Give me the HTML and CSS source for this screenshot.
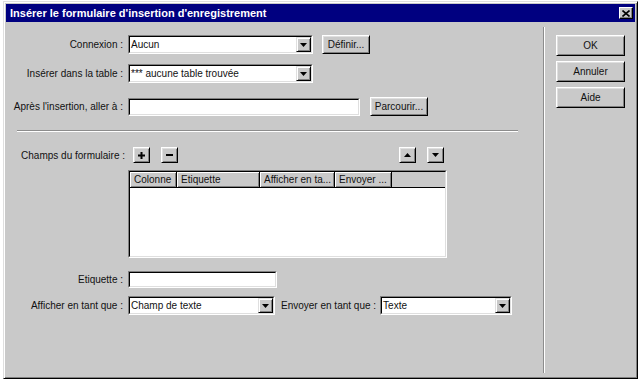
FILE: index.html
```html
<!DOCTYPE html>
<html lang="fr">
<head>
    <meta charset="UTF-8">
    <title>Insérer le formulaire d'insertion d'enregistrement</title>
    <link rel="stylesheet" href="styles.css">
</head>
<body>
    <div class="window">
        <div class="title-bar">
            <span class="title">Insérer le formulaire d'insertion d'enregistrement</span>
            <span class="close">
                <svg width="8" height="7" viewBox="0 0 8 7"><path d="M0.5 0.5 L7.5 6.5 M7.5 0.5 L0.5 6.5" stroke="#000" stroke-width="1.6"/></svg>
            </span>
        </div>
        <div class="content">
            <div class="main">
                <div class="row">
                    <span class="label">Connexion :</span>
                    <div class="select select-wide">
                        <div class="select-inner">
                            <span class="select-value">Aucun</span>
                            <span class="select-arrow"><svg width="7" height="4" viewBox="0 0 7 4"><polygon points="0,0 7,0 3.5,4" fill="#000"/></svg></span>
                        </div>
                    </div>
                    <button class="btn btn-define">Définir...</button>
                </div>
                <div class="row row-table">
                    <span class="label">Insérer dans la table :</span>
                    <div class="select select-wide">
                        <div class="select-inner">
                            <span class="select-value">*** aucune table trouvée</span>
                            <span class="select-arrow"><svg width="7" height="4" viewBox="0 0 7 4"><polygon points="0,0 7,0 3.5,4" fill="#000"/></svg></span>
                        </div>
                    </div>
                </div>
                <div class="row row-after">
                    <span class="label">Après l'insertion, aller à :</span>
                    <div class="field field-after"><div class="field-inner"></div></div>
                    <button class="btn btn-browse">Parcourir...</button>
                </div>
                <div class="separator"></div>
                <div class="row row-fields">
                    <span class="label label-fields">Champs du formulaire :</span>
                    <button class="btn tool-btn">
                        <svg width="7" height="7" viewBox="0 0 7 7"><rect x="2.5" y="0" width="2" height="7" fill="#000"/><rect x="0" y="2.5" width="7" height="2" fill="#000"/></svg>
                    </button>
                    <button class="btn tool-btn tool-minus">
                        <svg width="7" height="2" viewBox="0 0 7 2"><rect x="0" y="0" width="7" height="2" fill="#000"/></svg>
                    </button>
                    <button class="btn tool-btn tool-up">
                        <svg width="7" height="4" viewBox="0 0 7 4"><polygon points="0,4 7,4 3.5,0" fill="#000"/></svg>
                    </button>
                    <button class="btn tool-btn tool-down">
                        <svg width="7" height="4" viewBox="0 0 7 4"><polygon points="0,0 7,0 3.5,4" fill="#000"/></svg>
                    </button>
                </div>
                <div class="list">
                    <div class="list-inner">
                        <div class="list-head">
                            <span class="col col-name">Colonne</span>
                            <span class="col col-label">Etiquette</span>
                            <span class="col col-show">Afficher en ta...</span>
                            <span class="col col-send">Envoyer ...</span>
                            <span class="col-fill"></span>
                        </div>
                    </div>
                </div>
                <div class="row row-label">
                    <span class="label">Etiquette :</span>
                    <div class="field field-label"><div class="field-inner"></div></div>
                </div>
                <div class="row row-show">
                    <span class="label">Afficher en tant que :</span>
                    <div class="select select-show">
                        <div class="select-inner">
                            <span class="select-value">Champ de texte</span>
                            <span class="select-arrow"><svg width="7" height="4" viewBox="0 0 7 4"><polygon points="0,0 7,0 3.5,4" fill="#000"/></svg></span>
                        </div>
                    </div>
                    <span class="label-inline">Envoyer en tant que :</span>
                    <div class="select select-send">
                        <div class="select-inner">
                            <span class="select-value">Texte</span>
                            <span class="select-arrow"><svg width="7" height="4" viewBox="0 0 7 4"><polygon points="0,0 7,0 3.5,4" fill="#000"/></svg></span>
                        </div>
                    </div>
                </div>
            </div>
            <div class="side">
                <button class="btn side-btn">OK</button>
                <button class="btn side-btn">Annuler</button>
                <button class="btn side-btn">Aide</button>
            </div>
        </div>
    </div>
</body>
</html>
```

FILE: styles.css
```css
* {
    box-sizing: border-box;
}
body {
    margin: 0;
    background-color: #ffffff;
    font-family: "Liberation Sans", Arial, sans-serif;
    font-size: 10px;
    color: #111;
}
.window {
    display: flex;
    flex-direction: column;
    width: 635px;
    height: 378px;
    margin: 1px 0 0 3px;
    padding: 2px;
    background-color: #c9c9c9;
    border: 1px solid;
    border-color: #dfdfdf #000 #000 #dfdfdf;
    box-shadow: inset 1px 1px #fff, inset -1px -1px #808080;
}
.title-bar {
    display: flex;
    align-items: center;
    height: 18px;
    padding: 0 2px 0 4px;
    background-color: #000080;
}
.title {
    color: #fff;
    font-size: 11px;
    font-weight: bold;
}
.close {
    display: flex;
    align-items: center;
    justify-content: center;
    width: 14px;
    height: 12px;
    margin-left: auto;
    background-color: #c9c9c9;
    border: 1px solid;
    border-color: #fff #000 #000 #fff;
    box-shadow: inset -1px -1px #808080;
}
.content {
    display: flex;
    flex: 1;
}
.main {
    width: 537px;
    padding-top: 13px;
}
.side {
    flex: 1;
    display: flex;
    flex-direction: column;
    margin: 5px 0 3px;
    padding: 8px 0 0 12px;
    border-left: 1px solid #8c8c8c;
    box-shadow: inset 1px 0 #fff;
}
.row {
    display: flex;
    align-items: center;
    height: 19px;
}
.label {
    width: 122px;
    padding-right: 5px;
    text-align: right;
    white-space: nowrap;
}
.label-inline {
    margin: 0 4px 0 6px;
    white-space: nowrap;
}
.row-table {
    margin-top: 10px;
}
.row-after {
    margin-top: 14px;
}
.row-fields {
    height: 16px;
    margin-top: 15px;
}
.label-fields {
    padding-right: 3px;
}
.row-label {
    height: 17px;
    margin-top: 13px;
}
.row-show {
    margin-top: 8px;
}

/* sunken select box */
.select, .field, .list {
    border: 1px solid;
    border-color: #808080 #fff #fff #808080;
}
.select {
    height: 19px;
}
.select-inner, .field-inner, .list-inner {
    height: 100%;
    background-color: #fff;
    border: 1px solid;
    border-color: #000 #dfdfdf #dfdfdf #000;
}
.select-inner {
    display: flex;
    align-items: center;
}
.select-value {
    flex: 1;
    padding-left: 1px;
    white-space: nowrap;
}
.select-arrow {
    display: flex;
    align-items: center;
    justify-content: center;
    width: 15px;
    height: 100%;
    background-color: #c9c9c9;
    border: 1px solid;
    border-color: #dfdfdf #000 #000 #dfdfdf;
    box-shadow: inset 1px 1px #fff, inset -1px -1px #808080;
}
.select-wide {
    width: 185px;
}
.select-show {
    width: 147px;
}
.select-send {
    width: 132px;
}
.field {
    height: 18px;
}
.field-after {
    width: 232px;
}
.field-label {
    width: 149px;
    height: 17px;
}

/* raised buttons */
.btn {
    display: flex;
    align-items: center;
    justify-content: center;
    padding: 0;
    font-family: inherit;
    font-size: 10px;
    color: #111;
    background-color: #c9c9c9;
    border: 1px solid;
    border-color: #fff #000 #000 #fff;
    box-shadow: inset 1px 1px #dfdfdf, inset -1px -1px #808080;
}
.btn-define {
    width: 48px;
    height: 19px;
    margin-left: 9px;
}
.btn-browse {
    width: 58px;
    height: 19px;
    margin-left: 10px;
}
.tool-btn {
    width: 17px;
    height: 16px;
    margin-left: 11px;
}
.row-fields .tool-btn:first-of-type {
    margin-left: 5px;
}
.tool-up {
    margin-left: 221px;
}
.side-btn {
    width: 69px;
    height: 21px;
    margin-bottom: 5px;
}
.separator {
    width: 501px;
    height: 2px;
    margin: 14px 0 0 11px;
    border-top: 1px solid #8c8c8c;
    border-bottom: 1px solid #fff;
}

/* list view */
.list {
    width: 319px;
    height: 88px;
    margin: 7px 0 0 122px;
}
.list-head {
    display: flex;
    height: 16px;
    background-color: #c9c9c9;
}
.col {
    display: flex;
    align-items: center;
    padding-left: 4px;
    white-space: nowrap;
    border-right: 1px solid #000;
    border-bottom: 1px solid #000;
    box-shadow: inset 1px 1px #fff, inset -1px -1px #808080;
}
.col-name {
    width: 47px;
}
.col-label {
    width: 83px;
}
.col-show {
    width: 75px;
}
.col-send {
    width: 57px;
}
.col-fill {
    flex: 1;
    border-bottom: 1px solid #000;
}
```
